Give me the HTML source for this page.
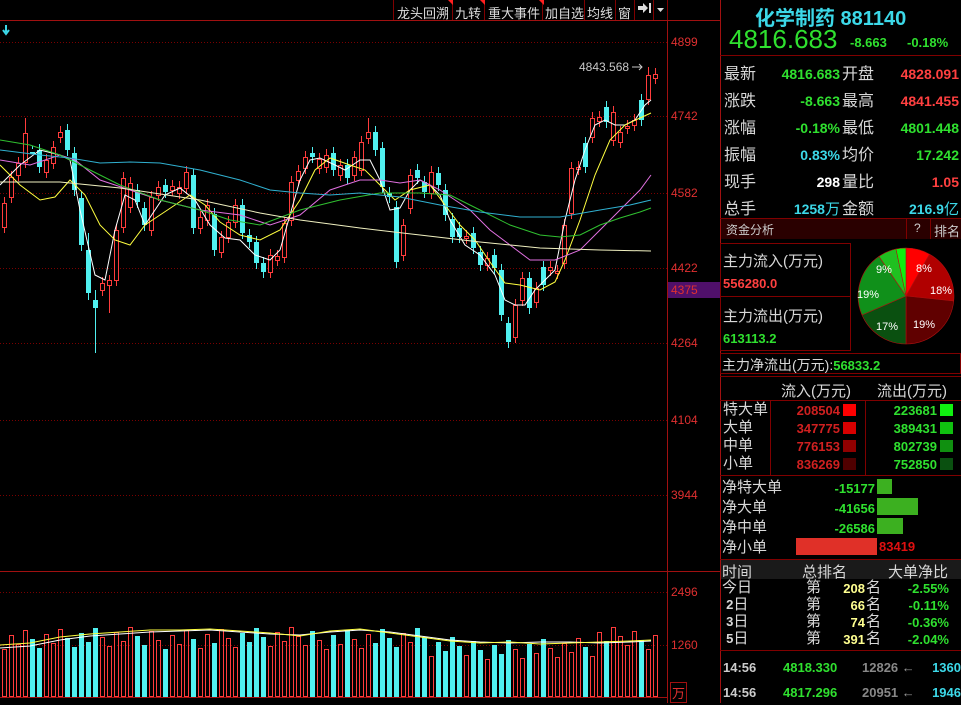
<!DOCTYPE html>
<html><head><meta charset="utf-8"><style>
*{margin:0;padding:0;box-sizing:border-box}
body{width:961px;height:703px;background:#000;overflow:hidden;position:relative;font-family:"Liberation Sans","Noto Sans CJK SC",sans-serif;color:#c8c8c8}
.a{position:absolute;white-space:nowrap}
.r{color:#ff4040}.g{color:#2fe02f}.c{color:#3cd8e8}.w{color:#fff}.y{color:#ffff60}
.lab{font-size:16px;color:#d8d8d8}
.num{font-family:"Liberation Sans","DejaVu Sans",sans-serif;font-weight:bold}
.ax{font-size:12px;color:#e03030;left:671px}
</style></head><body>
<svg class="a" style="left:0;top:0" width="961" height="703" id="sv">
<g stroke="#7a0000" stroke-dasharray="1,2" stroke-width="1">
<line x1="0" y1="42.5" x2="667" y2="42.5"/><line x1="0" y1="116.5" x2="667" y2="116.5"/><line x1="0" y1="193.5" x2="667" y2="193.5"/><line x1="0" y1="268.5" x2="667" y2="268.5"/><line x1="0" y1="343.5" x2="667" y2="343.5"/><line x1="0" y1="420.5" x2="667" y2="420.5"/><line x1="0" y1="495.5" x2="667" y2="495.5"/><line x1="0" y1="592.5" x2="667" y2="592.5"/><line x1="0" y1="645.5" x2="667" y2="645.5"/>
</g>
<g stroke="#a01010" stroke-width="1">
<line x1="0" y1="20.5" x2="720" y2="20.5"/><line x1="0" y1="571.5" x2="720" y2="571.5"/><line x1="667.5" y1="20" x2="667.5" y2="703"/><line x1="720.5" y1="0" x2="720.5" y2="703"/><line x1="0" y1="697.5" x2="667" y2="697.5"/>
</g>
<path d="M6 25v7M3 30l3 4l3-4" stroke="#3cd8e8" stroke-width="2" fill="none"/>
<g id="cd"></g>
<g fill="none" stroke-width="1">
<polyline stroke="#fff" points="0,185 20,165 40,150 60,155 70,160 80,210 95,275 105,280 115,230 125,195 135,200 145,225 155,210 165,195 180,188 195,200 210,225 225,238 240,240 255,255 270,260 280,250 290,215 300,180 310,160 320,158 335,165 345,170 360,160 370,160 380,180 390,210 400,208 410,190 420,180 430,185 440,195 450,220 465,245 480,255 495,275 505,300 515,305 525,305 535,290 545,280 555,270 565,220 575,180 585,150 595,125 605,120 615,125 625,125 635,120 645,105 651,100"/>
<polyline stroke="#ffff40" points="0,165 20,185 40,200 55,197 70,180 85,195 100,225 115,240 130,245 145,225 160,215 175,205 190,195 205,205 220,222 240,235 260,240 280,230 300,200 315,170 330,158 350,165 365,170 380,185 395,200 410,190 430,185 445,205 460,225 475,240 490,262 505,283 520,285 540,290 555,282 565,260 580,220 595,175 610,140 625,125 640,118 651,113"/>
<polyline stroke="#e070e0" points="0,160 30,165 60,155 75,160 100,180 130,190 160,200 200,210 240,215 270,225 300,215 330,190 360,180 380,180 400,183 420,180 440,190 470,210 490,230 510,245 530,260 555,260 580,250 600,230 620,210 640,190 651,175"/>
<polyline stroke="#30c030" points="0,140 30,145 60,155 90,170 120,185 160,200 200,210 230,220 260,225 300,210 340,200 380,193 420,193 450,195 480,210 510,225 540,235 560,237 580,235 600,225 620,218 640,212 651,208"/>
<polyline stroke="#30b0d0" points="0,150 40,155 70,158 100,163 130,162 160,163 200,170 240,180 270,190 300,193 330,195 360,193 400,197 440,205 480,212 520,217 560,217 600,210 630,205 651,200"/>
<polyline stroke="#f0f0c0" points="0,182 60,182 120,188 200,200 260,213 300,220 360,228 420,235 480,242 540,248 600,250 651,251"/>
<polyline stroke="#fff" points="0,648 30,646 60,640 90,636 120,634 150,632 180,631 210,630 240,632 270,634 300,635 330,632 360,630 390,632 420,636 450,640 480,642 510,643 540,642 570,642 600,643 630,642 651,641"/>
<polyline stroke="#ffff40" points="0,645 30,643 60,637 90,634 120,632 150,630 180,630 210,629 240,631 270,633 300,636 330,631 360,629 390,633 420,637 450,641 480,643 510,642 540,644 570,643 600,642 630,641 651,640"/>
</g>
<text x="579" y="71" fill="#c8c8c8" font-size="12" font-family="Liberation Sans">4843.568</text>
<path d="M632 67h10M639 64l3 3l-3 3" stroke="#c8c8c8" fill="none"/>
<rect x="668" y="282" width="52" height="16" fill="#50106a"/>
<g transform="translate(906,296)" stroke="#b01010" stroke-width="0.6">
<path d="M0 0V-48A48 48 0 0 1 23.5 -41.8Z" fill="#ff0000"/>
<path d="M0 0L23.5 -41.8A48 48 0 0 1 47.7 5Z" fill="#b00000"/>
<path d="M0 0L47.7 5A48 48 0 0 1 0 48Z" fill="#600000"/>
<path d="M0 0L0 48A48 48 0 0 1 -44 19Z" fill="#0a5010"/>
<path d="M0 0L-44 19A48 48 0 0 1 -27 -39.6Z" fill="#10901a"/>
<path d="M0 0L-27 -39.6A48 48 0 0 1 -10 -47Z" fill="#20c020"/>
<path d="M0 0L-10 -47A48 48 0 0 1 0 -48Z" fill="#10f010"/>
<g fill="#fff" stroke="none" font-size="11" font-family="Liberation Sans">
<text x="10" y="-24">8%</text><text x="24" y="-2">18%</text><text x="7" y="32">19%</text><text x="-30" y="34">17%</text><text x="-49" y="2">19%</text><text x="-30" y="-23">9%</text></g>
</g>
<rect x="877" y="479" width="15" height="15" fill="#3cb020"/>
<rect x="877" y="498" width="41" height="17" fill="#3cb020"/>
<rect x="877" y="518" width="26" height="16" fill="#3cb020"/>
<rect x="796" y="538" width="81" height="17" fill="#e03028"/>
<rect x="843" y="404" width="13" height="12" fill="#ff0000"/><rect x="843" y="422" width="13" height="12" fill="#d80000"/><rect x="843" y="440" width="13" height="12" fill="#900000"/><rect x="843" y="458" width="13" height="12" fill="#500000"/>
<rect x="940" y="404" width="13" height="12" fill="#10f010"/><rect x="940" y="422" width="13" height="12" fill="#10c010"/><rect x="940" y="440" width="13" height="12" fill="#109010"/><rect x="940" y="458" width="13" height="12" fill="#0a5010"/>
<g stroke="#800000" fill="none">
<line x1="720" y1="55.5" x2="961" y2="55.5"/><line x1="720" y1="218.5" x2="961" y2="218.5"/>
<rect x="720.5" y="243.5" width="130" height="53"/><rect x="720.5" y="296.5" width="130" height="54"/>
<rect x="720.5" y="353.5" width="240" height="20"/>
<line x1="720" y1="376.5" x2="961" y2="376.5"/>
<line x1="770.5" y1="400" x2="770.5" y2="475"/><line x1="865.5" y1="400" x2="865.5" y2="475"/><line x1="720" y1="400.5" x2="961" y2="400.5"/><line x1="720" y1="475.5" x2="961" y2="475.5"/>
<line x1="720" y1="559.5" x2="961" y2="559.5"/><line x1="720" y1="650.5" x2="961" y2="650.5"/>
</g>
<rect x="721" y="219" width="240" height="20" fill="#2a0000"/>
<line x1="906.5" y1="219" x2="906.5" y2="239" stroke="#800000"/><line x1="930.5" y1="219" x2="930.5" y2="239" stroke="#800000"/>
<rect x="721" y="560" width="240" height="19" fill="#1a1a1a"/>
<g stroke="#800000"><line x1="393.5" y1="0" x2="393.5" y2="20"/><line x1="452.5" y1="0" x2="452.5" y2="20"/><line x1="484.5" y1="0" x2="484.5" y2="20"/><line x1="542.5" y1="0" x2="542.5" y2="20"/><line x1="584.5" y1="0" x2="584.5" y2="20"/><line x1="615.5" y1="0" x2="615.5" y2="20"/><line x1="634.5" y1="0" x2="634.5" y2="20"/><line x1="653.5" y1="0" x2="653.5" y2="20"/><line x1="667.5" y1="0" x2="667.5" y2="20"/></g>
<path d="M448 0h5v5zM480 0h5v5zM539 0h5v5z" fill="#ff2020"/>
<path d="M638 6h5v-3l5 5l-5 5v-3h-5zM649 3h2v10h-2z" fill="#ddd"/>
<path d="M657 8h7l-3.5 4z" fill="#ddd"/>
</svg>
<div class="a" style="left:397px;top:3px;font-size:13px;color:#ddd">龙头回溯</div>
<div class="a" style="left:455px;top:3px;font-size:13px;color:#ddd">九转</div>
<div class="a" style="left:488px;top:3px;font-size:13px;color:#ddd">重大事件</div>
<div class="a" style="left:545px;top:3px;font-size:13px;color:#ddd">加自选</div>
<div class="a" style="left:587px;top:3px;font-size:13px;color:#ddd">均线</div>
<div class="a" style="left:618px;top:3px;font-size:13px;color:#ddd">窗</div>
<div class="a ax" style="top:35px">4899</div>
<div class="a ax" style="top:109px">4742</div>
<div class="a ax" style="top:186px">4582</div>
<div class="a ax" style="top:261px">4422</div>
<div class="a ax" style="top:283px">4375</div>
<div class="a ax" style="top:336px">4264</div>
<div class="a ax" style="top:413px">4104</div>
<div class="a ax" style="top:488px">3944</div>
<div class="a ax" style="top:585px">2496</div>
<div class="a ax" style="top:638px">1260</div>
<div class="a" style="left:670px;top:682px;font-size:13px;color:#e03030;border:1px solid #a01010;padding:0 1px">万</div>

<div class="a c" style="left:755px;top:2px;font-size:20px;font-weight:bold">化学制药 881140</div>
<div class="a g" style="left:729px;top:24px;font-size:26px">4816.683</div>
<div class="a g num" style="left:850px;top:35px;font-size:13px">-8.663</div>
<div class="a g num" style="left:907px;top:35px;font-size:13px">-0.18%</div>

<div class="a lab" style="left:724px;top:61px;line-height:27px">最新<br>涨跌<br>涨幅<br>振幅<br>现手<br>总手</div>
<div class="a lab" style="left:842px;top:61px;line-height:27px">开盘<br>最高<br>最低<br>均价<br>量比<br>金额</div>
<div class="a num" style="right:121px;top:61px;line-height:27px;font-size:14px;text-align:right"><span class="g">4816.683</span><br><span class="g">-8.663</span><br><span class="g">-0.18%</span><br><span class="c">0.83%</span><br><span class="w">298</span><br><span class="c">1258<span style="font-weight:normal;font-size:15px">万</span></span></div>
<div class="a num" style="right:2px;top:61px;line-height:27px;font-size:14px;text-align:right"><span class="r">4828.091</span><br><span class="r">4841.455</span><br><span class="g">4801.448</span><br><span class="g">17.242</span><br><span class="r">1.05</span><br><span class="c">216.9<span style="font-weight:normal;font-size:15px">亿</span></span></div>
<div class="a" style="left:726px;top:221px;font-size:12px;color:#ccc">资金分析</div>
<div class="a" style="left:914px;top:221px;font-size:12px;color:#ccc">?</div>
<div class="a" style="left:934px;top:221px;font-size:13px;color:#ccc">排名</div>
<div class="a lab" style="left:723px;top:250px;font-size:15px">主力流入(万元)</div>
<div class="a r num" style="left:723px;top:276px;font-size:13px">556280.0</div>
<div class="a lab" style="left:723px;top:305px;font-size:15px">主力流出(万元)</div>
<div class="a g num" style="left:723px;top:331px;font-size:13px">613113.2</div>
<div class="a lab" style="left:722px;top:355px;font-size:14px">主力净流出(万元):<span class="g num" style="font-size:13px">56833.2</span></div>
<div class="a lab" style="left:781px;top:380px;font-size:15px">流入(万元)</div>
<div class="a lab" style="left:877px;top:380px;font-size:15px">流出(万元)</div>
<div class="a lab" style="left:723px;top:401px;line-height:18px;font-size:15px">特大单<br>大单<br>中单<br>小单</div>
<div class="a num" style="right:121px;top:402px;line-height:18px;font-size:13px;color:#d02020;text-align:right">208504<br>347775<br>776153<br>836269</div>
<div class="a g num" style="right:24px;top:402px;line-height:18px;font-size:13px;text-align:right">223681<br>389431<br>802739<br>752850</div>
<div class="a lab" style="left:722px;top:478px;line-height:20px;font-size:15px">净特大单<br>净大单<br>净中单<br>净小单</div>
<div class="a g num" style="right:86px;top:479px;line-height:20px;font-size:13px;text-align:right">-15177<br>-41656<br>-26586</div>
<div class="a r num" style="left:879px;top:539px;font-size:13px;color:#e01010">83419</div>
<div class="a lab" style="left:722px;top:561px;font-size:15px">时间</div>
<div class="a lab" style="left:802px;top:561px;font-size:15px">总排名</div>
<div class="a lab" style="left:888px;top:561px;font-size:15px">大单净比</div>
<div class="a lab" style="left:722px;top:579px;line-height:17px;font-size:15px">今日<br>&nbsp;<span class="num" style="font-size:13px">2</span>日<br>&nbsp;<span class="num" style="font-size:13px">3</span>日<br>&nbsp;<span class="num" style="font-size:13px">5</span>日</div>
<div class="a lab" style="left:806px;top:579px;line-height:17px;font-size:15px">第<br>第<br>第<br>第</div>
<div class="a num" style="right:96px;top:580px;line-height:17px;font-size:13px;color:#ffff90;text-align:right">208<br>66<br>74<br>391</div>
<div class="a lab" style="left:866px;top:579px;line-height:17px;font-size:15px">名<br>名<br>名<br>名</div>
<div class="a g num" style="right:12px;top:580px;line-height:17px;font-size:13px;text-align:right">-2.55%<br>-0.11%<br>-0.36%<br>-2.04%</div>
<div class="a num" style="left:723px;top:655px;line-height:25px;font-size:13px;color:#ccc">14:56<br>14:56</div>
<div class="a g num" style="left:783px;top:655px;line-height:25px;font-size:13px">4818.330<br>4817.296</div>
<div class="a num" style="left:862px;top:655px;line-height:25px;font-size:13px;color:#888">12826 <span style="color:#999">&#x2190;</span><br>20951 <span style="color:#999">&#x2190;</span></div>
<div class="a c num" style="right:0;top:655px;line-height:25px;font-size:13px;text-align:right">1360<br>1946</div>
<script>
var C=[[0,203,227],[7,177,197],[14,163,175],[21,133,162,118],[28,152,143],[35,150,167],[42,160,172],[49,147,163],[56,132,137],[63,130,150],[70,153,190],[77,198,245],[84,250,293,233,300],[91,300,308,290,353],[98,283,290],[105,280,285,275,313],[112,230,280],[119,178,227],[126,183,207],[133,190,202],[140,208,225],[147,197,230],[154,187,195],[161,185,192],[168,186,190],[175,187,193],[182,172,188],[189,175,228],[196,217,228],[203,205,220],[210,214,250],[217,237,252],[224,222,237],[231,205,222],[238,205,233],[245,235,242],[252,242,263],[259,263,272],[266,255,272],[273,256,260],[280,223,257],[287,182,220],[294,171,180],[301,157,168],[308,153,157],[315,159,168],[322,155,167],[329,153,170],[336,165,175],[343,165,178],[350,157,175],[357,142,170],[364,132,138,118],[371,132,150],[378,148,187],[385,193,197],[392,207,262],[399,225,255],[406,175,208],[413,170,178],[420,182,192],[427,172,193],[434,173,185],[441,190,215],[448,219,237],[455,228,237],[462,236,238],[469,233,248],[476,252,265],[483,258,265],[490,255,268],[497,270,315],[504,323,342],[511,305,337],[518,278,300],[525,278,308],[532,288,302],[539,267,285],[546,267,270],[553,271,273],[560,225,263],[567,168,213],[574,167,169],[581,143,167],[588,118,137],[595,117,121],[602,107,122],[609,112,140],[616,132,142],[623,126,128],[630,120,125],[637,100,120],[644,75,99,67],[651,74,78,68]];
var cy=[4,5,9,10,11,12,13,19,20,23,27,30,34,35,36,37,44,47,49,53,54,55,56,59,60,62,63,64,65,67,68,70,71,72,75,77,83,86,91];
var s='',cyan='#50f0f0',red='#ff3c3c';
for(var i=0;i<C.length;i++){var c=C[i],x=c[0]+2,t=c[1],b=c[2],hi=c[3]||t-6,lo=c[4]||b+6,cyn=cy.indexOf(i)>=0,col=cyn?cyan:red;
s+='<line x1="'+(x+2.5)+'" y1="'+hi+'" x2="'+(x+2.5)+'" y2="'+lo+'" stroke="'+col+'"/>';
if(cyn)s+='<rect x="'+x+'" y="'+t+'" width="5" height="'+Math.max(2,b-t)+'" fill="'+cyan+'"/>';
else s+='<rect x="'+(x+.5)+'" y="'+(t+.5)+'" width="4" height="'+Math.max(1,b-t)+'" fill="#000" stroke="'+red+'"/>';
var h=48+((i*37)%23)-(i>60&&i<85?10:0);var vt=697-h;
if(cyn)s+='<rect x="'+x+'" y="'+vt+'" width="5" height="'+h+'" fill="'+cyan+'"/>';
else s+='<rect x="'+(x+.5)+'" y="'+(vt+.5)+'" width="4" height="'+(h-1)+'" fill="none" stroke="'+red+'"/>';}
document.getElementById('cd').innerHTML=s;
</script>
</body></html>
